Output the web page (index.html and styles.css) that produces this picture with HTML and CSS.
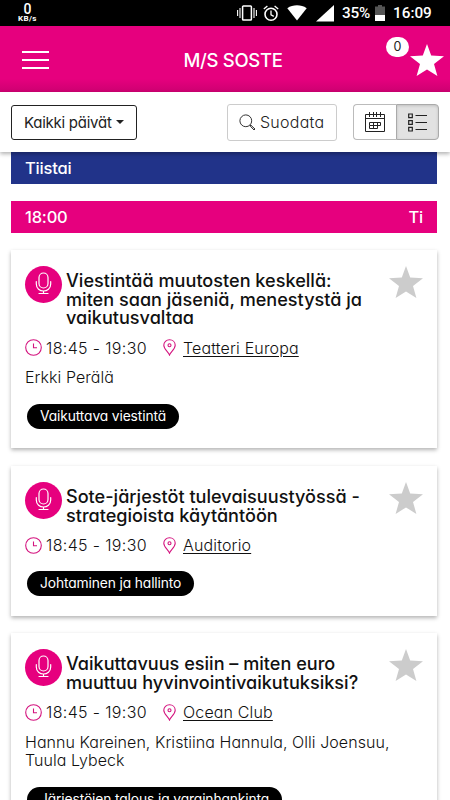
FILE: index.html
```html
<!DOCTYPE html>
<html lang="fi">
<head>
    <meta charset="utf-8">
    <title>M/S SOSTE</title>
    <link rel="stylesheet" href="styles.css">
</head>
<body>

<svg class="defs" width="0" height="0">
    <symbol id="star" viewBox="0 0 34 32">
        <path d="M17 0 L21.2 11.6 L34 12.2 L24 20 L27.4 32 L17 25.4 L6.6 32 L10 20 L0 12.2 L12.8 11.6 Z" fill="currentColor"/>
    </symbol>
    <symbol id="mic" viewBox="0 0 37 37">
        <g fill="none" stroke="#fff" stroke-width="1.2" stroke-linecap="round">
            <rect x="14" y="7" width="9" height="15" rx="4.5"/>
            <path d="M11.3 15.5 V18 C11.3 27.3 25.7 27.3 25.7 18 V15.5 M18.5 25 V27.5 M14 27.5 H23"/>
        </g>
    </symbol>
    <symbol id="clock" viewBox="0 0 17 17">
        <g fill="none" stroke="#d4147f" stroke-width="1.1">
            <circle cx="8.5" cy="8.5" r="7.8"/>
            <path d="M8.5 4.5 V8.8 H12"/>
        </g>
    </symbol>
    <symbol id="pin" viewBox="0 0 13 17">
        <g fill="none" stroke="#d4147f" stroke-width="1.1">
            <path d="M6.5 16 C5.2 12.6 0.8 10 0.8 6.2 C0.8 3 3.3 0.8 6.5 0.8 C9.7 0.8 12.2 3 12.2 6.2 C12.2 10 7.8 12.6 6.5 16 Z"/>
            <circle cx="6.5" cy="6.2" r="1.5"/>
        </g>
    </symbol>
</svg>

<div class="status-bar">
    <div class="net-speed"><b>0</b><span>KB/s</span></div>
    <div class="status-icons">
        <svg class="vibrate" width="20" height="16" viewBox="0 0 20 16" fill="none" stroke="#fff">
            <rect x="5.6" y="1" width="8.8" height="14" rx="0.8" stroke-width="1.5"/>
            <path d="M3 3 V13 M0.6 5 V11 M17 3 V13 M19.4 5 V11" stroke-width="1.1"/>
        </svg>
        <svg class="alarm" width="16" height="17" viewBox="0 0 16 17" fill="none" stroke="#fff" stroke-width="1.6">
            <circle cx="8" cy="9.3" r="6"/>
            <path d="M0.8 4 L4.4 1 M15.2 4 L11.6 1 M8 5.5 V9.8 L10.8 11.4" stroke-width="1.3"/>
        </svg>
        <svg class="wifi" width="20" height="16" viewBox="0 0 20 16"><path d="M0.3 3.2 C6 -0.6 14 -0.6 19.7 3.2 L10 15.6 Z" fill="#fff"/></svg>
        <svg class="signal" width="18" height="17" viewBox="0 0 18 17"><path d="M18 0 V16.5 H0 Z" fill="#fff"/></svg>
        <span class="percent">35%</span>
        <svg class="battery" width="10" height="16" viewBox="0 0 10 16">
            <path d="M0 1.6 H3 V0 H7 V1.6 H10 V10 H0 Z" fill="#555"/>
            <path d="M0 10 H10 V16 H0 Z" fill="#fff"/>
        </svg>
        <span class="time">16:09</span>
    </div>
</div>

<div class="header">
    <div class="menu"><i></i><i></i><i></i></div>
    <h1>M/S SOSTE</h1>
    <div class="favourites">
        <svg width="34" height="32"><use href="#star"/></svg>
        <span class="badge">0</span>
    </div>
</div>

<div class="toolbar">
    <button class="days">Kaikki päivät <i class="caret"></i></button>
    <button class="filter">
        <svg width="17" height="17" viewBox="0 0 17 17" fill="none" stroke="#333">
            <circle cx="6.8" cy="6.8" r="5.9"/>
            <path d="M11 11 L12 12 M12 11.3 L16 15 L15 16 L11.3 12.2 Z"/>
        </svg>
        <span>Suodata</span>
    </button>
    <div class="views">
        <button class="view">
            <svg width="20" height="20" viewBox="0 0 20 20" fill="none" stroke="#222">
                <path d="M0.5 2.5 H19.5 V19.5 H0.5 Z M0.5 6.5 H19.5 M4.5 0 V5 M8.5 0 V5 M11.5 0 V5 M15.5 0 V5"/>
                <path d="M4.5 10.5 H15.5 V13.5 H4.5 Z M4.5 13.5 V16.5 H12.5 V10.5 M8.5 10.5 V16.5"/>
            </svg>
        </button>
        <button class="view active">
            <svg width="19" height="19" viewBox="0 0 19 19" fill="none" stroke="#222">
                <path d="M0.7 1 H4.3 V4.6 H0.7 Z M0.7 7.7 H4.3 V11.3 H0.7 Z M0.7 14.4 H4.3 V18 H0.7 Z" stroke-width="1.2"/>
                <path d="M7.5 2.5 H19 M7.5 9.5 H19 M7.5 16.5 H19"/>
            </svg>
        </button>
    </div>
</div>

<div class="program">
    <div class="day">Tiistai</div>
    <div class="slot"><span>18:00</span><span>Ti</span></div>

    <div class="card">
        <div class="card-top">
            <svg class="type" width="37" height="37"><use href="#mic"/></svg>
            <h2>Viestintää muutosten keskellä:<br>miten saan jäseniä, menestystä ja<br>vaikutusvaltaa</h2>
            <svg class="star" width="34" height="32"><use href="#star"/></svg>
        </div>
        <div class="meta">
            <svg width="17" height="17"><use href="#clock"/></svg>
            <span class="hours">18:45 - 19:30</span>
            <svg width="13" height="17"><use href="#pin"/></svg>
            <a class="place">Teatteri Europa</a>
        </div>
        <p class="speakers">Erkki Perälä</p>
        <span class="tag">Vaikuttava viestintä</span>
    </div>

    <div class="card no-speakers">
        <div class="card-top">
            <svg class="type" width="37" height="37"><use href="#mic"/></svg>
            <h2>Sote-järjestöt tulevaisuustyössä -<br>strategioista käytäntöön</h2>
            <svg class="star" width="34" height="32"><use href="#star"/></svg>
        </div>
        <div class="meta">
            <svg width="17" height="17"><use href="#clock"/></svg>
            <span class="hours">18:45 - 19:30</span>
            <svg width="13" height="17"><use href="#pin"/></svg>
            <a class="place">Auditorio</a>
        </div>
        <span class="tag">Johtaminen ja hallinto</span>
    </div>

    <div class="card">
        <div class="card-top">
            <svg class="type" width="37" height="37"><use href="#mic"/></svg>
            <h2>Vaikuttavuus esiin – miten euro<br>muuttuu hyvinvointivaikutuksiksi?</h2>
            <svg class="star" width="34" height="32"><use href="#star"/></svg>
        </div>
        <div class="meta">
            <svg width="17" height="17"><use href="#clock"/></svg>
            <span class="hours">18:45 - 19:30</span>
            <svg width="13" height="17"><use href="#pin"/></svg>
            <a class="place">Ocean Club</a>
        </div>
        <p class="speakers">Hannu Kareinen, Kristiina Hannula, Olli Joensuu,<br>Tuula Lybeck</p>
        <span class="tag">Järjestöjen talous ja varainhankinta</span>
    </div>
</div>

</body>
</html>
```
FILE: styles.css
```css
* {
    box-sizing: border-box;
}
body {
    margin: 0;
    height: 800px;
    overflow: hidden;
    display: flex;
    flex-direction: column;
    background: #fff;
    color: #111;
    font-family: Inter, "Liberation Sans", sans-serif;
    font-feature-settings: "cv11";
    white-space: nowrap;
}
svg {
    flex: none;
    display: block;
}
.defs {
    position: absolute;
}
button {
    margin: 0;
    padding: 0;
    background: #fff;
    font: inherit;
    font-feature-settings: inherit;
    color: #222;
    display: flex;
    align-items: center;
}

/* phone status bar */
.status-bar {
    flex: none;
    height: 26px;
    padding: 0 17px 0 18px;
    background: #000;
    color: #fff;
    font-family: Roboto, sans-serif;
    display: flex;
    justify-content: space-between;
    align-items: center;
}
.net-speed {
    display: flex;
    flex-direction: column;
    align-items: center;
    font-size: 8px;
    line-height: 8px;
    font-weight: 700;
}
.net-speed span {
    letter-spacing: 0.4px;
}
.net-speed b {
    font-size: 14px;
    line-height: 12px;
    font-weight: 500;
}
.status-icons {
    display: flex;
    align-items: center;
    font-size: 15.3px;
    font-weight: 500;
}
.alarm {
    margin-left: 6px;
}
.wifi {
    margin-left: 8px;
}
.signal {
    margin: 0 8px 0 9px;
}
.percent {
    width: 29px;
    letter-spacing: -0.2px;
}
.battery {
    margin: 0 8px 0 4px;
}
.time {
    width: 40px;
}

/* header */
.header {
    flex: none;
    height: 66px;
    padding: 2px 6px 0 22px;
    background: linear-gradient(#e6007e 80%, #cd0071);
    color: #fff;
    display: flex;
    align-items: center;
    justify-content: space-between;
}
.menu {
    width: 27px;
    height: 18px;
    display: flex;
    flex-direction: column;
    justify-content: space-between;
}
.menu i {
    height: 2px;
    background: #fff;
}
.header h1 {
    margin: 0 0 0 7px;
    font-size: 18.5px;
    font-weight: 500;
    letter-spacing: -0.3px;
}
.favourites {
    position: relative;
}
.badge {
    position: absolute;
    left: -24px;
    top: -7px;
    width: 23px;
    height: 20px;
    border-radius: 10px;
    background: #fff;
    color: #222;
    font-size: 12.5px;
    line-height: 20px;
    text-align: center;
}

/* toolbar */
.toolbar {
    flex: none;
    position: relative;
    height: 60px;
    padding: 0 10px 0 11px;
    background: #fff;
    box-shadow: 0 2px 4px rgba(0, 0, 0, 0.3);
    display: flex;
    align-items: center;
}
.days {
    width: 126px;
    height: 35px;
    padding-left: 12px;
    border: 1px solid #222;
    border-radius: 3px;
    font-size: 15px;
    letter-spacing: -0.25px;
}
.caret {
    margin-left: 4px;
    border: 4px solid transparent;
    border-top-color: #222;
    border-bottom: 0;
}
.filter {
    width: 110px;
    height: 37px;
    margin-left: 90px;
    padding-left: 11px;
    gap: 4px;
    border: 1px solid #ccc;
    border-radius: 3px;
    font-size: 16px;
    font-weight: 300;
    letter-spacing: 0.25px;
}
.views {
    margin-left: 16px;
    display: flex;
}
.view {
    width: 43px;
    height: 36px;
    justify-content: center;
    border: 1px solid #bbb;
    border-right: 0;
    border-radius: 4px 0 0 4px;
}
.view.active {
    border: 1px solid #aaa;
    border-radius: 0 4px 4px 0;
    background: #e2e2e2;
    box-shadow: inset 0 1px 3px rgba(0, 0, 0, 0.15);
}

/* program list */
.program {
    flex: 1;
    min-height: 0;
    overflow: hidden;
    padding: 0 13px 0 11px;
}
.day,
.slot {
    height: 32px;
    padding: 0 14px;
    background: #213389;
    color: #fff;
    font-size: 16.5px;
    line-height: 32px;
    font-weight: 500;
    letter-spacing: -0.2px;
    display: flex;
    justify-content: space-between;
}
.slot {
    margin: 17px 0;
    background: #e6007e;
}
.card {
    height: 198px;
    margin-bottom: 18px;
    padding: 16px 14px 0;
    box-shadow: 0 2px 4px rgba(0, 0, 0, 0.3);
}
.card.no-speakers {
    height: 150px;
    margin-bottom: 17px;
}
.card-top {
    display: flex;
    align-items: flex-start;
}
.type {
    border-radius: 50%;
    background: #e6007e;
}
.card h2 {
    flex: 1;
    margin: 5px 0 0 4px;
    font-size: 18.1px;
    line-height: 18.6px;
    font-weight: 500;
}
.star {
    color: #ccc;
}
.meta {
    height: 21px;
    margin-top: 10.7px;
    display: flex;
    align-items: center;
    font-size: 16px;
    font-weight: 300;
}
.hours {
    width: 101px;
    margin: 0 16px 0 4px;
    letter-spacing: 0.35px;
}
.place {
    margin-left: 7px;
    letter-spacing: 0.15px;
    text-decoration: underline;
    text-underline-offset: 2px;
}
.speakers {
    margin: 10px 0 0;
    font-size: 16px;
    line-height: 18.5px;
    font-weight: 300;
    letter-spacing: 0.05px;
}
.tag {
    display: inline-block;
    height: 25px;
    margin: 17px 0 0 2px;
    padding: 0 13px;
    border-radius: 13px;
    background: #000;
    color: #fff;
    font-size: 13.8px;
    line-height: 24px;
    letter-spacing: -0.12px;
}
.no-speakers .tag {
    margin-top: 15px;
}
```
